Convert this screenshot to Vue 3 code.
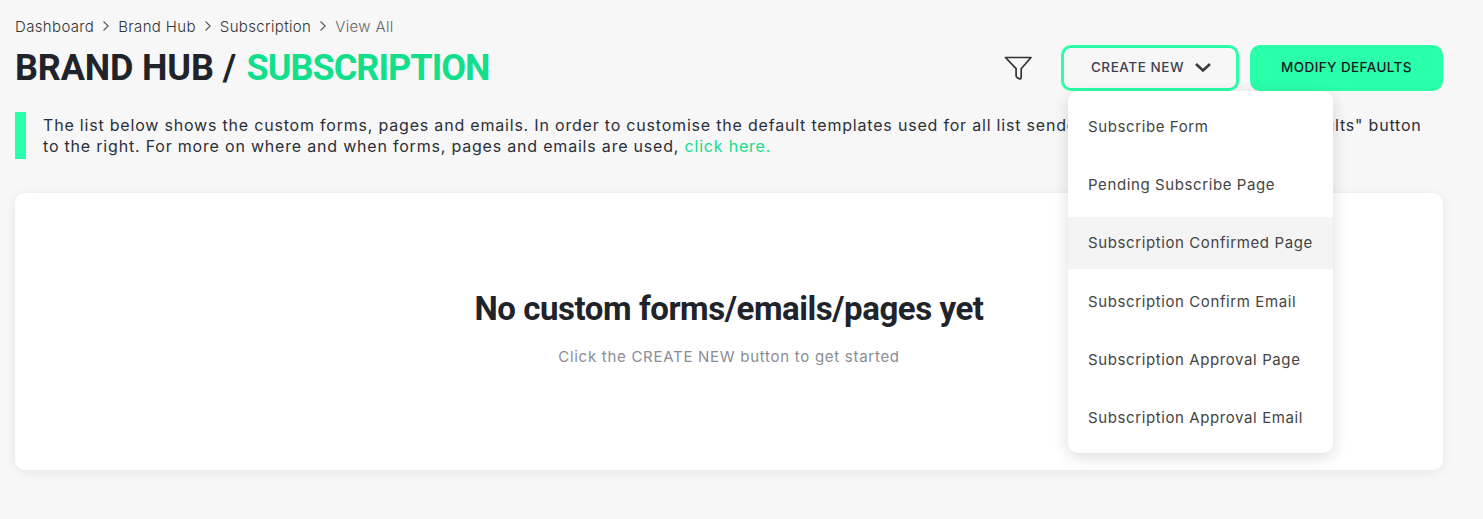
<template>
  <div class="page">
    <nav class="crumbs">
      <template v-for="(c, i) in crumbs" :key="c">
        <span :class="{ last: i === crumbs.length - 1 }">{{ c }}</span>
        <svg v-if="i < crumbs.length - 1" class="sep" width="8" height="12" viewBox="0 0 8 12">
          <path d="M1.5 1.5 6.2 6 1.5 10.5" fill="none" stroke="#555" stroke-width="1.1" />
        </svg>
      </template>
    </nav>

    <header class="head">
      <h1><span class="dark">BRAND HUB</span> / <span class="green">SUBSCRIPTION</span></h1>
      <div class="actions">
        <svg class="filter" width="30" height="26" viewBox="0 0 30 26">
          <path d="M2.5 2.5h25.5l-9.8 11.2v8.6q0 2.2-2 1.4l-1.800-1q-1.300-.7-1.300-2v-7z" fill="none" stroke="#333" stroke-width="1.700" stroke-linejoin="round" />
        </svg>
        <div class="create-wrap">
          <button class="btn create">
            CREATE NEW
            <svg width="18" height="11" viewBox="0 0 18 11">
              <path d="M2 2l7 6.500L16 2" fill="none" stroke="#3c3c3c" stroke-width="2.600" />
            </svg>
          </button>
          <ul class="menu">
            <li v-for="m in menu" :key="m" :class="{ hover: m === 'Subscription Confirmed Page' }">{{ m }}</li>
          </ul>
        </div>
        <button class="btn modify">MODIFY DEFAULTS</button>
      </div>
    </header>

    <div class="notice">
      <p>The list below shows the custom forms, pages and emails. In order to customise the default templates used for all list senders, just click the "Modify Defaults" button to the right. For more on where and when forms, pages and emails are used, <a href="#">click here.</a></p>
    </div>

    <section class="card">
      <h2>No custom forms/emails/pages yet</h2>
      <p>Click the CREATE NEW button to get started</p>
    </section>
  </div>
</template>

<script setup>
const crumbs = ['Dashboard', 'Brand Hub', 'Subscription', 'View All']
const menu = [
  'Subscribe Form',
  'Pending Subscribe Page',
  'Subscription Confirmed Page',
  'Subscription Confirm Email',
  'Subscription Approval Page',
  'Subscription Approval Email'
]
</script>

<style>
html, body {
  margin: 0;
  background: #f7f7f7;
}
</style>

<style scoped>
.page {
  box-sizing: border-box;
  height: 519px;
  padding: 16px 40px 0 15px;
  font-family: "Inter", "Open Sans", sans-serif;
  color: #222;
  background: #f7f7f7;
  overflow: hidden;
}
.crumbs {
  display: flex;
  align-items: center;
  height: 20px;
  font-size: 15px;
  font-weight: 300;
  letter-spacing: 0.35px;
  color: #333;
}
.crumbs .sep {
  margin: 0 8px;
}
.crumbs .last {
  color: #666;
}
.head {
  display: flex;
  justify-content: space-between;
  align-items: center;
  height: 46px;
  margin-top: 9px;
}
h1 {
  margin: 0;
  font-family: "Roboto", sans-serif;
  font-size: 36px;
  font-weight: 700;
  color: #21232b;
}
.dark {
  letter-spacing: -0.15px;
}
.green {
  margin-left: 1.500px;
  letter-spacing: -0.95px;
  color: #12df8b;
}
.actions {
  display: flex;
  align-items: center;
}
.filter {
  margin-right: 28px;
}
.create-wrap {
  position: relative;
  margin-right: 11px;
}
.btn {
  box-sizing: border-box;
  height: 46px;
  padding: 0 0 2px;
  border-radius: 10px;
  font-family: inherit;
  font-size: 13.500px;
  font-weight: 500;
}
.create {
  display: flex;
  align-items: center;
  justify-content: center;
  gap: 10px;
  width: 178px;
  padding-left: 3px;
  background: #f7f7f7;
  border: 3px solid #2affa9;
  color: #3c4250;
  letter-spacing: 0.55px;
}
.modify {
  width: 193px;
  background: #2affa9;
  border: 0;
  color: #14171f;
  letter-spacing: 0.4px;
}
.menu {
  position: absolute;
  top: 46px;
  left: 7px;
  z-index: 2;
  display: flex;
  flex-direction: column;
  gap: 6.400px;
  width: 265px;
  margin: 0;
  padding: 9px 0;
  list-style: none;
  background: #fff;
  border-radius: 10px;
  box-shadow: 0 4px 16px rgba(0, 0, 0, 0.14);
}
.menu li {
  display: flex;
  align-items: center;
  height: 52px;
  padding-left: 20px;
  font-size: 15px;
  font-weight: 400;
  letter-spacing: 0.6px;
  color: #444;
}
.menu li.hover {
  background: #f4f4f4;
}
.notice {
  margin-top: 21px;
  height: 47px;
  border-left: 11px solid #2affa9;
  padding-left: 17px;
}
.notice p {
  margin: 0;
  font-size: 16px;
  line-height: 21px;
  padding-top: 3px;
  color: #2b2f38;
  letter-spacing: 0.8px;
}
.notice a {
  color: #12df8b;
  text-decoration: none;
}
.card {
  margin-top: 34px;
  height: 277px;
  box-sizing: border-box;
  padding-top: 94px;
  background: #fff;
  border-radius: 10px;
  box-shadow: 0 2px 12px rgba(0, 0, 0, 0.07);
  text-align: center;
}
.card h2 {
  margin: 0;
  font-family: "Roboto", sans-serif;
  font-size: 33px;
  line-height: 44px;
  font-weight: 700;
  letter-spacing: -0.45px;
  color: #21232b;
}
.card p {
  margin: 16px 0 0;
  font-size: 15px;
  color: #8a8d94;
  letter-spacing: 0.72px;
}
</style>
